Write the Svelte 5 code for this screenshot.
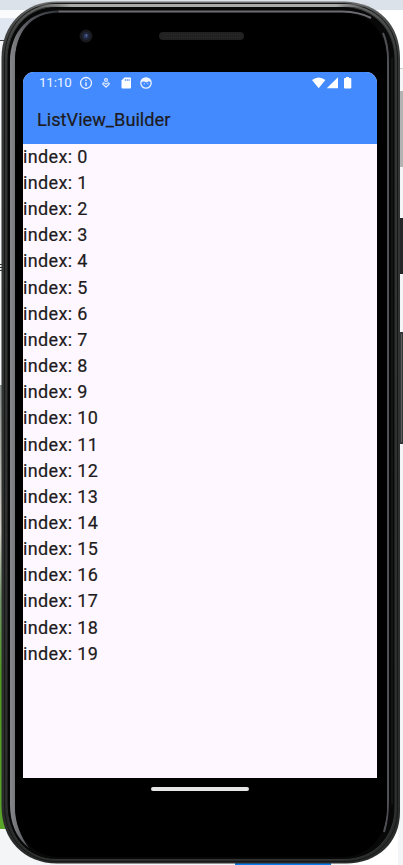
<script>
  const items = Array.from({ length: 20 }, (_, index) => `index: ${index}`);
</script>

<main class="stage">
  <svg class="device" width="403" height="865" viewBox="0 0 403 865" aria-hidden="true">
    <defs>
      <linearGradient id="leaf" x1="0" y1="0" x2="0" y2="1">
        <stop offset="0" stop-color="#8c9490" />
        <stop offset=".33" stop-color="#d3cfc5" />
        <stop offset=".48" stop-color="#75966c" />
        <stop offset=".65" stop-color="#4f9b20" />
        <stop offset="1" stop-color="#5ba52b" />
      </linearGradient>
      <linearGradient id="rim" x1="0" y1="0" x2="0" y2="1">
        <stop offset="0" stop-color="#686b69" />
        <stop offset=".025" stop-color="#484a49" />
        <stop offset=".07" stop-color="#353736" />
        <stop offset="1" stop-color="#292a2a" />
      </linearGradient>
      <linearGradient id="topshine" x1="0" y1="0" x2="1" y2="0">
        <stop offset="0" stop-color="#777a78" stop-opacity="0" />
        <stop offset=".12" stop-color="#a7aaa8" />
        <stop offset=".9" stop-color="#a7aaa8" />
        <stop offset="1" stop-color="#777a78" stop-opacity="0" />
      </linearGradient>
      <linearGradient id="sheen" x1="0" y1="0" x2="1" y2="0">
        <stop offset="0" stop-color="#85878a" />
        <stop offset=".35" stop-color="#55575d" />
        <stop offset="1" stop-color="#34363d" />
      </linearGradient>
    </defs>
    <rect width="403" height="865" fill="#f4f5f7" />
    <rect width="403" height="10" fill="#dce2ea" />
    <rect y="10" width="50" height="8" fill="#fafbfc" />
    <rect y="18" width="30" height="22" fill="#e1e7f0" />
    <rect y="40" width="4" height="1" fill="#444" />
    <rect x="350" y="10" width="53" height="58" fill="#fff" />
    <rect x="398" y="68" width="5" height="1" fill="#ccc" />
    <rect x="398" y="91" width="5" height="76" fill="#b3b3b3" />
    <rect y="264" width="2" height="1" fill="#333" />
    <rect y="267" width="2" height="1" fill="#333" />
    <rect y="270" width="2" height="1" fill="#333" />
    <rect y="385" width="20" height="444" fill="url(#leaf)" />
    <rect x="350" y="820" width="48" height="45" fill="#fff" />
    <rect x="235" y="863" width="96" height="2" fill="#087cea" />
    <rect x="399" y="218" width="6" height="56" rx="1" fill="#252627" />
    <rect x="399" y="332" width="6" height="112" rx="1" fill="#343637" />
    <path d="M401.500 334v108" stroke="#5c5e5e" />

    <path d="M57 1.500H345C379 3 400 25 400 58V812C400 842 378 863.500 346 863.500H57C24 863.500 1.500 840 1.500 806V58C1.500 24 25 1.500 57 1.500Z" fill="url(#rim)" />
    <path d="M57 3.500H344C377 5 397.500 27 397.500 59V810C397.500 838 377 861.500 345 861.500H56C26 861.500 4.500 837 4.500 806V59C4.500 26 27 3.500 57 3.500Z" fill="none" stroke="#171717" />
    <path d="M57 6.500H344C374 8 395 29 395 60V808C395 837 374 859.500 344 859.500H56C27 859.500 7 836 7 804V60C7 29 28 6.500 57 6.500Z" fill="#080808" stroke="#323333" />
    <rect x="30" y="4" width="340" height="3" fill="url(#topshine)" />
    <path d="M58 11.500H342Q360 12 371 18" fill="none" stroke="#6d6c72" stroke-width="2" />
    <path d="M383 33Q388 44 388 61V800Q388 819 384 832" fill="none" stroke="#505157" stroke-width="2" />
    <path d="M392 58V804" fill="none" stroke="#1d1e1f" />
    <path d="M10 804V62C10 31 30 10.500 59 10.500V12.500C31 12.500 15 32 15 63V806Q16 831 29 848Q10 833 10 804Z" fill="url(#sheen)" />
    <path d="M60 13H343C369 13 387 32 387 62V807C387 836 369 857 343 857H59C32 857 15 835 15 807V62C15 32 32 13 60 13Z" fill="#000" />

    <circle cx="86" cy="36" r="6.500" fill="#17191d" />
    <circle cx="86" cy="36" r="4" fill="#20263a" />
    <circle cx="86" cy="36" r="2" fill="#35436d" />
    <circle cx="86.500" cy="35" r=".8" fill="#6579a5" />
    <rect x="159" y="32" width="85" height="8" rx="4" fill="#202120" />
    <path d="M163 34.500H240M163 37.500H240" stroke="#2b2c2b" stroke-dasharray="1 1" />
  </svg>

  <section class="screen">
    <header>
      <div class="status">
        <time>11:10</time>
        <svg class="notices" width="76" height="14" viewBox="0 0 76 14" fill="none" stroke="#edf3ff" aria-hidden="true">
          <circle cx="7" cy="7" r="5.500" stroke-width="1.300" />
          <path d="M7 6.200V10M7 3.600V5" stroke-width="1.400" />
          <circle cx="27" cy="4" r="1.400" stroke-width="1.100" />
          <path d="M27 11.200L23.900 8.200Q23.400 6.800 24.700 6.800Q25.600 6.900 27 8.200Q28.400 6.900 29.300 6.800Q30.600 6.800 30.100 8.200Z" stroke-width="1.100" />
          <path d="M45.500 1.500H51Q52 1.500 52 2.500V11.500Q52 12.500 51 12.500H43.500Q42.500 12.500 42.500 11.500V4.500Z" fill="#fff" stroke="none" />
          <path d="M46.300 3V5M48.200 3V5M50.100 3V5" stroke="#448aff" stroke-width=".9" />
          <circle cx="67" cy="7" r="5.200" stroke-width="1.300" />
          <path d="M62 6Q62.500 2 67 1.700Q71.500 2 72 6L69.500 5.200L67.500 6.500L65 5.500Z" fill="#edf3ff" stroke="none" />
          <path d="M64.800 7.800H65.800M68.300 7.800H69.300" stroke-width="1" />
        </svg>
        <svg class="signals" width="42" height="14" viewBox="0 0 42 14" fill="#fff" aria-hidden="true">
          <path d="M0 4Q6.700-1.200 13.400 4L6.700 12.300Z" />
          <path d="M26 1.300V12.300H14.700Z" />
          <path d="M34 1H37V2H38.300Q39.300 2 39.300 3V11.500Q39.300 12.500 38.300 12.500H33Q32 12.500 32 11.500V3Q32 2 33 2H34Z" />
        </svg>
      </div>
      <h1>ListView_Builder</h1>
    </header>
    <ul>
      {#each items as item}
        <li>{item}</li>
      {/each}
    </ul>
  </section>
  <div class="home"></div>
</main>

<style>
  .stage {
    position: relative;
    box-sizing: border-box;
    width: 403px;
    height: 865px;
    padding: 72px 26px 0 23px;
    overflow: hidden;
    font-family: Roboto, sans-serif;
    color: #1d1b20;
  }
  .device {
    position: absolute;
    inset: 0;
    display: block;
  }
  .screen {
    position: relative;
    width: 354px;
    height: 706px;
    overflow: hidden;
    border-radius: 11px 11px 0 0;
    background: #fef7ff;
  }
  header {
    height: 71.5px;
    background: #448aff;
  }
  .status {
    display: flex;
    align-items: center;
    height: 22px;
    padding-left: 16px;
  }
  time {
    width: 40px;
    font-size: 13.3px;
    line-height: 22px;
    letter-spacing: -.1px;
    color: #edf3ff;
  }
  .signals {
    margin-left: auto;
    margin-right: 23px;
  }
  h1 {
    margin: 0;
    padding: 14px 0 0 14px;
    font-size: 18.2px;
    font-weight: 400;
    line-height: 24px;
    -webkit-text-stroke: .2px #1d1b20;
  }
  ul {
    margin: 0;
    padding: .3px 0 0;
    list-style: none;
  }
  li {
    height: 26.16px;
    font-size: 18px;
    line-height: 26.16px;
    letter-spacing: .36px;
    white-space: nowrap;
    -webkit-text-stroke: .2px #1d1b20;
  }
  .home {
    position: relative;
    width: 98px;
    height: 4px;
    margin: 9px 0 0 128px;
    border-radius: 2px;
    background: #e6e6e6;
  }
</style>
